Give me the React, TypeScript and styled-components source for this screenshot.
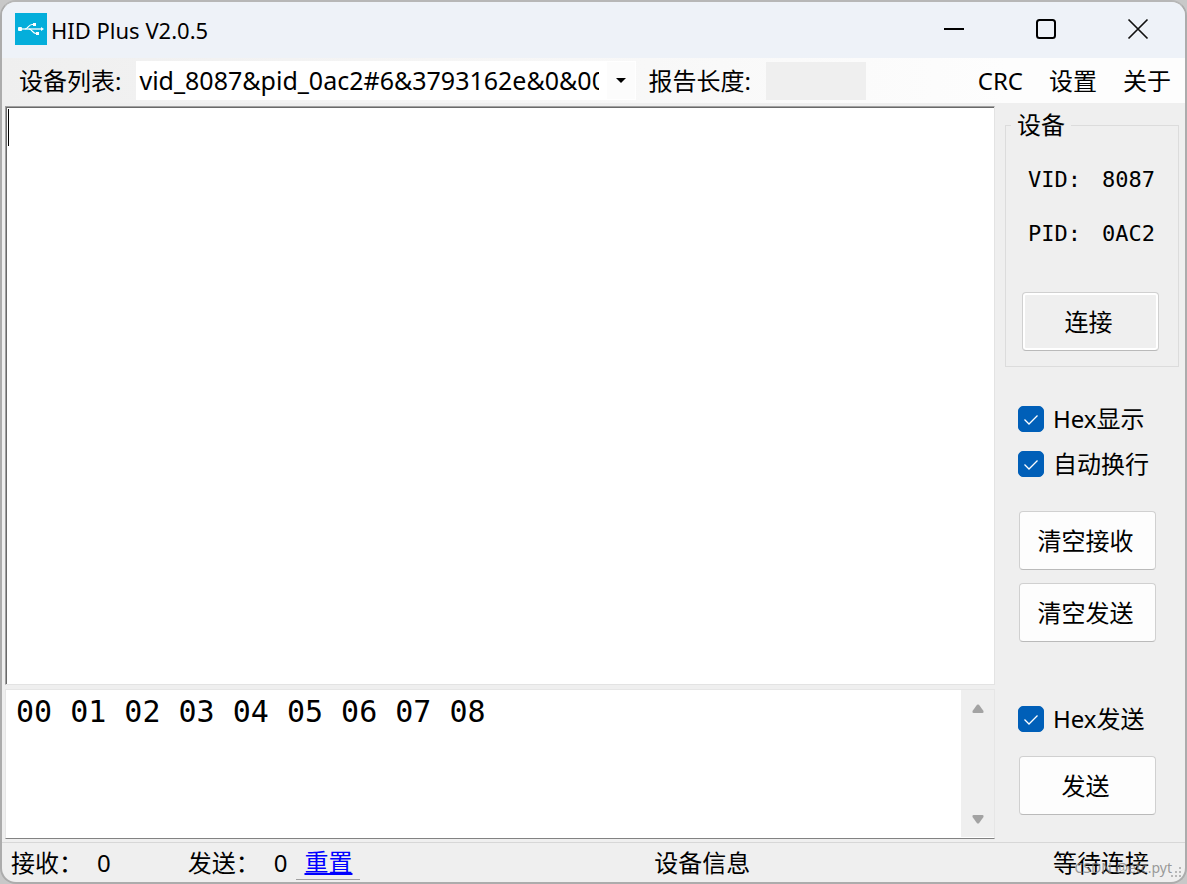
import React, { useState } from "react";
import styled, { createGlobalStyle } from "styled-components";

const sans = '"Noto Sans", "Noto Sans CJK SC", sans-serif';
const mono = '"DejaVu Sans Mono", "Noto Sans CJK SC", monospace';

const GlobalStyle = createGlobalStyle`
  *, *::before, *::after { box-sizing: border-box; }
  body { margin: 0; background: #c8c8c8; font-family: ${sans}; font-size: 24px; line-height: 36px; color: #000; }
  button, input, select, textarea { font: inherit; color: inherit; margin: 0; }
`;

const Window = styled.div`
  position: relative;
  min-height: 100vh;
  display: flex;
  flex-direction: column;
  border: 2px solid #acacac;
  border-top-color: #b7b7b7;
  border-radius: 16px;
  overflow: hidden;
  background: #efefef;
`;

const TitleBar = styled.header`
  display: flex;
  align-items: center;
  height: 56px;
  padding: 0 1px 2px 13px;
  background: #eef2f8;
`;

const Title = styled.h1`
  flex: 1;
  margin: 0 0 0 4px;
  padding-top: 2px;
  font-size: 22px;
  font-weight: 400;
  line-height: 32px;
`;

const WindowButton = styled.button`
  display: grid;
  place-items: center;
  width: 92px;
  height: 54px;
  padding: 0;
  border: 0;
  background: none;
`;

const Toolbar = styled.div`
  display: flex;
  align-items: center;
  height: 45px;
  padding: 0 14px 0 17px;
  background: linear-gradient(90deg, #efefef, #fdfdfd 85%);
`;

const Label = styled.label`
  white-space: nowrap;
`;

const Combo = styled.div`
  position: relative;
  flex: 0 1 500px;
  min-width: 120px;
  margin: 0 12px 0 15px;
`;

const ComboSelect = styled.select`
  display: block;
  appearance: none;
  width: 100%;
  height: 39px;
  padding: 0 37px 2px 3px;
  border: 0;
  border-radius: 0;
  outline: 0;
  background: #fff;
  font-size: 25px;
`;

const ComboArrow = styled.span`
  position: absolute;
  top: 1px;
  right: 1px;
  bottom: 1px;
  display: grid;
  place-items: center;
  width: 28px;
  background: #fcfcfc;
  pointer-events: none;
`;

const LengthInput = styled.input`
  width: 100px;
  height: 38px;
  margin-left: 15px;
  border: 0;
  background: #efefef;
`;

const Menu = styled.nav`
  display: flex;
  gap: 26px;
  margin-left: auto;
`;

const MenuButton = styled.button`
  padding: 0;
  border: 0;
  background: none;
  white-space: nowrap;
`;

const Main = styled.main`
  flex: 1;
  display: flex;
  border-bottom: 1px solid #d7d7d7;
`;

const Editors = styled.div`
  flex: 1;
  min-width: 0;
  display: flex;
  flex-direction: column;
  gap: 4px;
  padding: 3px 0 3px 3px;
`;

const Receive = styled.div`
  position: relative;
  flex: 1;
  display: flex;
  min-height: 200px;
  padding: 1px 0 0 1px;
  border: 1px solid #e3e3e3;
  border-top-color: #a0a0a0;
  border-left-color: #a0a0a0;
  background: #696969;
`;

const TextArea = styled.textarea<{ $large?: boolean }>`
  flex: 1;
  min-width: 0;
  display: block;
  resize: none;
  border: 0;
  border-radius: 0;
  outline: 0;
  background: #fff;
  padding: ${(p) => (p.$large ? "4px 10px" : "0 4px")};
  font-family: ${mono};
  font-size: ${(p) => (p.$large ? 30 : 24)}px;
`;

const Caret = styled.span`
  position: absolute;
  top: 2px;
  left: 2px;
  width: 1px;
  height: 37px;
  background: #000;
`;

const Send = styled.div`
  display: flex;
  height: 150px;
  border: 1px solid #e6e6e6;
  border-bottom-color: #828282;
`;

const ScrollTrack = styled.div`
  display: flex;
  flex-direction: column;
  justify-content: space-between;
  width: 33px;
  border-bottom: 1px solid #fff;
`;

const ScrollButton = styled.button`
  display: grid;
  place-items: center;
  height: 36px;
  padding: 0;
  border: 0;
  background: none;
`;

const Sidebar = styled.aside`
  flex: none;
  width: 190px;
  padding: 8px 6px 0 10px;
`;

const DeviceGroup = styled.fieldset`
  min-width: 0;
  margin: 0 0 34px;
  padding: 23px 19px 15px 16px;
  border: 1px solid #dcdcdc;
`;

const Legend = styled.legend`
  margin-left: -11px;
  padding: 0 6px;
  line-height: 28px;
`;

const Ids = styled.dl`
  display: grid;
  grid-template-columns: 74px auto;
  row-gap: 18px;
  margin: 0 0 40px 6px;
  font-family: ${mono};
  font-size: 22px;

  dt, dd { margin: 0; }
`;

const PushButton = styled.button<{ $pressed?: boolean }>`
  display: block;
  width: 137px;
  height: 59px;
  padding: 0 4px 0 0;
  border: 1px solid #d0d0d0;
  border-bottom-color: #bababa;
  border-radius: 4px;
  background: ${(p) => (p.$pressed ? "#efefef" : "#fdfdfd")};
  box-shadow: ${(p) => (p.$pressed ? "inset 0 0 0 2px #fff" : "none")};
`;

const ButtonStack = styled.div<{ $top: number; $bottom?: number }>`
  display: grid;
  gap: 13px;
  padding: ${(p) => p.$top}px 0 ${(p) => p.$bottom ?? 0}px 14px;
`;

const Checks = styled.div`
  display: grid;
  gap: 9px;
  padding-left: 13px;
`;

const CheckLabel = styled.label`
  display: flex;
  align-items: center;
  gap: 9px;
  white-space: nowrap;
`;

const CheckBox = styled.span`
  display: grid;
  width: 26px;
  height: 26px;

  > * { grid-area: 1 / 1; }
  svg { pointer-events: none; }
`;

const CheckInput = styled.input`
  appearance: none;
  width: 26px;
  height: 26px;
  border: 1px solid #868686;
  border-radius: 5px;
  background: #f7f7f7;

  &:checked { border-color: #005fb8; background: #005fb8; }
`;

const StatusBar = styled.footer`
  display: grid;
  grid-template-columns: 13fr 10fr;
  align-items: center;
  height: 39px;
  padding: 0 36px 0 9px;
`;

const Counters = styled.div`
  display: flex;
  align-items: center;
`;

const Counter = styled.span`
  display: flex;
  gap: 14px;
  white-space: nowrap;
`;

const SecondCounter = styled(Counter)`
  margin-left: 77px;
`;

const ResetLink = styled.a`
  margin-left: 9px;
  padding: 0 8px;
  border-bottom: 1px solid #a0a0a0;
  color: #0000ff;
  line-height: 34px;
`;

const DeviceStatus = styled.div`
  display: flex;
  justify-content: space-between;
  white-space: nowrap;
`;

const Watermark = styled.span`
  position: absolute;
  right: 13px;
  bottom: 4px;
  color: rgba(130, 130, 130, 0.8);
  font-size: 14px;
  line-height: 20px;
`;

const Grip = styled.svg`
  position: absolute;
  right: 2px;
  bottom: 3px;
`;

function Check({ children }: { children: React.ReactNode }) {
  const [on, setOn] = useState(true);
  return (
    <CheckLabel>
      <CheckBox>
        <CheckInput type="checkbox" checked={on} onChange={() => setOn(!on)} />
        {on && (
          <svg width="26" height="26" viewBox="0 0 26 26" fill="none" stroke="#fff" strokeWidth="1.3">
            <path d="M6.500 13.500l4.500 4.500 8.500-8.500" />
          </svg>
        )}
      </CheckBox>
      {children}
    </CheckLabel>
  );
}

function UsbLogo() {
  return (
    <svg width="32" height="32" viewBox="0 0 32 32" aria-hidden="true">
      <rect width="32" height="32" fill="#04aedb" />
      <path d="M5 16H27" stroke="#a5e1f2" strokeWidth="1.8" />
      <path d="M10 16c3 0 3.500-4.500 7-4.500h2M14 16c3 0 3.500 4.500 7 4.500h2" fill="none" stroke="#fff" strokeWidth="1.2" />
      <rect x="3" y="14" width="4" height="4" rx="1" fill="#fff" />
      <rect x="18" y="10" width="3" height="3" fill="#fff" />
      <rect x="21" y="19" width="3" height="3" fill="#fff" />
      <path d="M26 14l3 2-3 2z" fill="#fff" />
    </svg>
  );
}

export default function App() {
  const [received, setReceived] = useState("");
  const [outgoing, setOutgoing] = useState("00 01 02 03 04 05 06 07 08");
  return (
    <>
      <GlobalStyle />
      <Window>
        <TitleBar>
          <UsbLogo />
          <Title>HID Plus V2.0.5</Title>
          <WindowButton aria-label="最小化">
            <svg width="22" height="22" fill="none" stroke="#000" strokeWidth="2"><path d="M1 11H21" /></svg>
          </WindowButton>
          <WindowButton aria-label="最大化">
            <svg width="22" height="22" fill="none" stroke="#000" strokeWidth="2"><rect x="2" y="2" width="18" height="18" rx="2.500" /></svg>
          </WindowButton>
          <WindowButton aria-label="关闭">
            <svg width="22" height="22" fill="none" stroke="#111" strokeWidth="1.700"><path d="M1.500 1.500l19 19M20.500 1.500l-19 19" /></svg>
          </WindowButton>
        </TitleBar>

        <Toolbar>
          <Label htmlFor="device">设备列表:</Label>
          <Combo>
            <ComboSelect id="device">
              <option>vid_8087&amp;pid_0ac2#6&amp;3793162e&amp;0&amp;0000</option>
            </ComboSelect>
            <ComboArrow>
              <svg width="10" height="5"><path d="M0 0H10L5 5z" /></svg>
            </ComboArrow>
          </Combo>
          <Label htmlFor="length">报告长度:</Label>
          <LengthInput id="length" readOnly />
          <Menu>
            <MenuButton>CRC</MenuButton>
            <MenuButton>设置</MenuButton>
            <MenuButton>关于</MenuButton>
          </Menu>
        </Toolbar>

        <Main>
          <Editors>
            <Receive>
              <TextArea aria-label="接收" value={received} onChange={(e) => setReceived(e.target.value)} />
              <Caret />
            </Receive>
            <Send>
              <TextArea $large aria-label="发送" value={outgoing} onChange={(e) => setOutgoing(e.target.value)} />
              <ScrollTrack>
                <ScrollButton aria-label="向上">
                  <svg width="12" height="9" fill="#a3a3a3"><path d="M5 .8Q6 0 7 .8L11.500 7Q12 9 10.500 9H1.500Q0 9 .5 7z" /></svg>
                </ScrollButton>
                <ScrollButton aria-label="向下">
                  <svg width="12" height="9" fill="#a3a3a3"><path d="M5 8.200Q6 9 7 8.200L11.500 2Q12 0 10.500 0H1.500Q0 0 .5 2z" /></svg>
                </ScrollButton>
              </ScrollTrack>
            </Send>
          </Editors>

          <Sidebar>
            <DeviceGroup>
              <Legend>设备</Legend>
              <Ids>
                <dt>VID:</dt>
                <dd>8087</dd>
                <dt>PID:</dt>
                <dd>0AC2</dd>
              </Ids>
              <PushButton $pressed>连接</PushButton>
            </DeviceGroup>
            <Checks>
              <Check>Hex显示</Check>
              <Check>自动换行</Check>
            </Checks>
            <ButtonStack $top={29} $bottom={59}>
              <PushButton>清空接收</PushButton>
              <PushButton>清空发送</PushButton>
            </ButtonStack>
            <Checks>
              <Check>Hex发送</Check>
            </Checks>
            <ButtonStack $top={19}>
              <PushButton>发送</PushButton>
            </ButtonStack>
          </Sidebar>
        </Main>

        <StatusBar>
          <Counters>
            <Counter><span>接收：</span><span>0</span></Counter>
            <SecondCounter><span>发送：</span><span>0</span></SecondCounter>
            <ResetLink href="#reset">重置</ResetLink>
          </Counters>
          <DeviceStatus>
            <span>设备信息</span>
            <span>等待连接</span>
          </DeviceStatus>
        </StatusBar>
        <Watermark>CSDN @etc.pyt</Watermark>
        <Grip width="13" height="13" fill="#b8b8b8" aria-hidden="true">
          <path d="M9 1h2v2H9zM5 5h2v2H5zM9 5h2v2H9zM1 9h2v2H1zM5 9h2v2H5zM9 9h2v2H9z" />
        </Grip>
      </Window>
    </>
  );
}
